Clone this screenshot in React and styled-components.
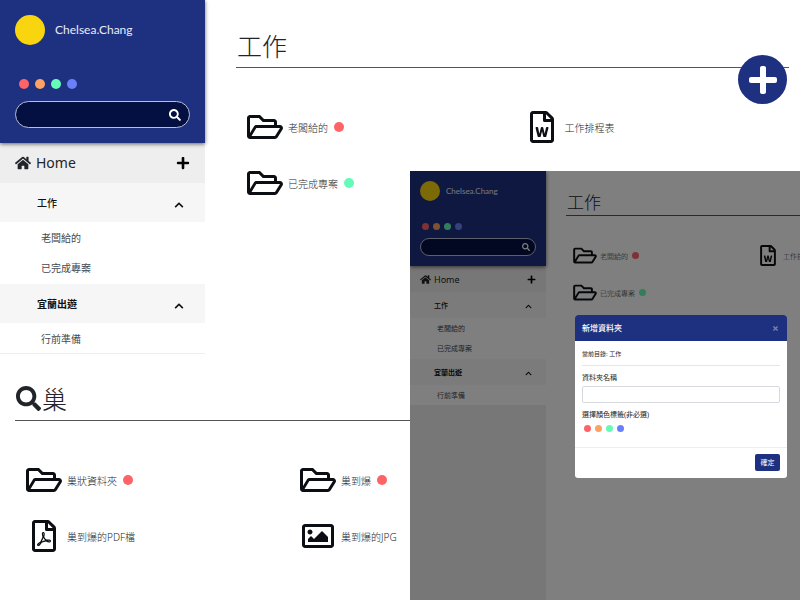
import React from "react";
import styled, { createGlobalStyle, ThemeProvider } from "styled-components";
import {
  FaHome,
  FaPlus,
  FaSearch,
  FaChevronUp,
  FaRegFolderOpen,
  FaRegFileWord,
  FaRegFilePdf,
  FaRegImage,
  FaTimes,
} from "react-icons/fa";

const regular = {
  sidebar: 205,
  pad: 15,
  avatar: 30,
  nameGap: 10,
  name: 12,
  dot: 10,
  dotGap: 6,
  dotInset: 4,
  dotsTop: 34,
  dotsBottom: 12,
  search: 27,
  searchPad: 8,
  searchIcon: 12,
  home: 14,
  homeGap: 5,
  homeRow: 40,
  homeIcon: 16,
  group: 10,
  groupRow: 39,
  groupIndent: 37,
  groupRight: 21,
  chevron: 10,
  chevronDrop: 5,
  item: 10,
  itemRow: 30,
  itemIndent: 41,
  listPad: 2,
  title: 25,
  titleTop: 27,
  titleRow: 40,
  titlePad: 4,
  gutter: 31,
  right: 11,
  filesTop: 31,
  filesPad: 11,
  fileRow: 56,
  fileIcon: 32,
  fileIconBox: 36,
  fileGap: 5,
  file: 10,
  column: 0,
};

const compact = {
  sidebar: 136,
  pad: 10,
  avatar: 20,
  nameGap: 6,
  name: 8,
  dot: 7,
  dotGap: 4,
  dotInset: 2,
  dotsTop: 22,
  dotsBottom: 8,
  search: 18,
  searchPad: 5,
  searchIcon: 8,
  home: 9,
  homeGap: 3,
  homeRow: 26,
  homeIcon: 11,
  group: 7,
  groupRow: 26,
  groupIndent: 24,
  groupRight: 14,
  chevron: 7,
  chevronDrop: 3,
  item: 7,
  itemRow: 20,
  itemIndent: 27,
  listPad: 1,
  title: 17,
  titleTop: 18,
  titleRow: 26,
  titlePad: 2,
  gutter: 20,
  right: 0,
  filesTop: 21,
  filesPad: 7,
  fileRow: 37,
  fileIcon: 21,
  fileIconBox: 24,
  fileGap: 3,
  file: 7,
  column: 183,
};

const px = (key) => ({ theme }) => `${theme[key]}px`;

const colors = {
  navy: "#1e3080",
  red: "#fc6468",
  orange: "#fba264",
  green: "#66fbb8",
  blue: "#6a80fb",
};

const GlobalStyle = createGlobalStyle`
  *, *::before, *::after { box-sizing: border-box; }
  body {
    margin: 0;
    background: #fff;
    color: #212529;
    font-family: "Noto Sans", "Noto Sans CJK TC", sans-serif;
  }
  button, input { font: inherit; color: inherit; }
  h1, h2, p, ul { margin: 0; padding: 0; }
`;

const Page = styled.div`
  position: relative;
  min-height: 100vh;
  overflow: hidden;
`;

const Workspace = styled.div`
  display: flex;
  align-items: flex-start;
`;

const Sidebar = styled.nav`
  flex: none;
  width: ${px("sidebar")};
`;

const Profile = styled.header`
  position: relative;
  padding: ${px("pad")};
  background: ${colors.navy};
  box-shadow: 0 1px 4px rgba(0, 0, 0, 0.6);
`;

const User = styled.div`
  display: flex;
  align-items: center;
  gap: ${px("nameGap")};
  font-family: Lato, sans-serif;
  font-size: ${px("name")};
  line-height: 1;
  color: #e9ecf8;
`;

const Avatar = styled.span`
  width: ${px("avatar")};
  height: ${px("avatar")};
  border-radius: 50%;
  background: #f8d50f;
`;

const DotRow = styled.div`
  display: flex;
  gap: ${px("dotGap")};
  margin: ${px("dotsTop")} 0 ${px("dotsBottom")} ${px("dotInset")};
`;

const DotButton = styled.button`
  width: ${px("dot")};
  height: ${px("dot")};
  padding: 0;
  border: 0;
  border-radius: 50%;
  background: ${({ $color }) => colors[$color]};
`;

const SearchBox = styled.form`
  display: flex;
  align-items: center;
  height: ${px("search")};
  padding: 0 ${px("searchPad")};
  border: 1px solid #b9bfd8;
  border-radius: 14px;
  background: #051042;
  color: #fff;
`;

const SearchInput = styled.input`
  flex: 1;
  min-width: 0;
  padding: 0;
  border: 0;
  outline: 0;
  background: transparent;
  font-size: ${px("name")};
`;

const IconButton = styled.button`
  display: flex;
  padding: 0;
  border: 0;
  background: transparent;
  color: inherit;
  font-size: ${px("searchIcon")};
`;

const HomeRow = styled.div`
  display: flex;
  align-items: center;
  justify-content: space-between;
  height: ${px("homeRow")};
  padding: 0 ${px("pad")};
  background: #eee;
`;

const HomeLink = styled.a`
  display: flex;
  align-items: center;
  gap: ${px("homeGap")};
  color: #212529;
  font-size: ${px("home")};
  line-height: 1;
  text-decoration: none;

  svg { font-size: ${px("homeIcon")}; }
`;

const AddButton = styled(IconButton)`
  color: #000;
  font-size: ${px("home")};
`;

const GroupButton = styled.button`
  display: flex;
  align-items: center;
  justify-content: space-between;
  width: 100%;
  height: ${px("groupRow")};
  padding: 0 ${px("groupRight")} 0 ${px("groupIndent")};
  border: 0;
  background: #f6f6f6;
  color: #111;
  font-size: ${px("group")};
  font-weight: ${({ $strong }) => ($strong ? 700 : 500)};

  svg {
    margin-top: ${px("chevronDrop")};
    font-size: ${px("chevron")};
  }
`;

const ItemList = styled.ul`
  padding-bottom: ${({ theme, $last }) => ($last ? 0 : theme.listPad)}px;
  list-style: none;
  background: #fff;
  border-bottom: ${({ $last }) => ($last ? "1px solid #eee" : "0")};
`;

const ItemLink = styled.a`
  display: flex;
  align-items: center;
  height: ${px("itemRow")};
  padding-left: ${px("itemIndent")};
  color: #444a50;
  font-size: ${px("item")};
  text-decoration: none;
`;

const Main = styled.main`
  flex: 1;
  min-width: 0;
  padding: ${px("titleTop")} ${px("right")} 0 ${px("gutter")};
`;

const TitleBar = styled.div`
  position: relative;
  border-bottom: 1px solid #555;
`;

const Title = styled.h1`
  display: flex;
  align-items: center;
  gap: 1px;
  height: ${px("titleRow")};
  padding: 0 0 ${px("titlePad")} 1px;
  font-size: ${px("title")};
  font-weight: 300;
  line-height: 1;
  font-family: "Noto Sans CJK TC", sans-serif;
`;

const FloatingAdd = styled.button`
  position: absolute;
  top: 28px;
  right: 2px;
  display: flex;
  align-items: center;
  justify-content: center;
  width: 49px;
  height: 49px;
  padding: 0;
  border: 0;
  border-radius: 50%;
  background: ${colors.navy};
  color: #fff;
  font-size: 32px;
`;

const Files = styled.div`
  display: grid;
  grid-template-columns: repeat(2, minmax(${px("column")}, 1fr));
  margin-top: ${px("filesTop")};
`;

const FileLink = styled.a`
  display: flex;
  align-items: center;
  gap: ${px("fileGap")};
  height: ${px("fileRow")};
  padding-left: ${px("filesPad")};
  color: #24292e;
  font-size: ${px("file")};
  font-weight: 300;
  text-decoration: none;
  white-space: nowrap;
`;

const FileIcon = styled.span`
  display: flex;
  justify-content: center;
  width: ${px("fileIconBox")};
  color: #0b0f13;

  svg {
    width: ${px("fileIconBox")};
    height: ${px("fileIcon")};
  }
`;

const Tag = styled.span`
  width: ${px("dot")};
  height: ${px("dot")};
  margin-left: 1px;
  border-radius: 50%;
  background: ${({ $color }) => colors[$color]};
`;

const Results = styled.section`
  margin: 26px 237px 0 15px;
`;

const Preview = styled.section`
  position: absolute;
  top: 171px;
  right: 0;
  bottom: 0;
  left: 410px;
  overflow: hidden;
  background: linear-gradient(90deg, #eee 136px, #fff 136px);
`;

const Backdrop = styled.div`
  position: absolute;
  inset: 0;
  padding: 144px 13px 0 165px;
  background: rgba(0, 0, 0, 0.5);
`;

const Dialog = styled.form`
  overflow: hidden;
  border-radius: 3px;
  background: #fff;
  font-size: 7px;
  line-height: 10px;
`;

const DialogHeader = styled.div`
  display: flex;
  align-items: center;
  justify-content: space-between;
  height: 26px;
  padding: 0 8px 0 7px;
  background: ${colors.navy};
  color: #fff;
`;

const DialogTitle = styled.h2`
  font-size: 8px;
  font-weight: 500;
`;

const CloseButton = styled(IconButton)`
  color: #7a82a8;
  font-size: 7px;
`;

const DialogBody = styled.div`
  height: 107px;
  padding: 8px 7px 0;
  border-bottom: 1px solid #eceef0;
`;

const Path = styled.p`
  padding-bottom: 6px;
  margin-bottom: 7px;
  border-bottom: 1px solid #e4e6e8;
  font-size: 6px;
`;

const FieldLabel = styled.label`
  display: block;
`;

const TextInput = styled.input`
  display: block;
  width: 100%;
  height: 17px;
  margin: 3px 0 7px;
  border: 1px solid #d6dade;
  border-radius: 2px;
  background: #fff;
`;

const ColorChoices = styled.fieldset`
  min-width: 0;
  margin: 0;
  padding: 0;
  border: 0;

  legend { padding: 0; }
`;

const RadioRow = styled.div`
  display: flex;
  gap: 4px;
  margin: 5px 0 0 2px;
`;

const ColorRadio = styled.input`
  appearance: none;
  width: 7px;
  height: 7px;
  margin: 0;
  border-radius: 50%;
  background: ${({ $color }) => colors[$color]};
`;

const DialogFooter = styled.div`
  display: flex;
  justify-content: flex-end;
  padding: 6px 7px 7px;
`;

const ConfirmButton = styled.button`
  width: 25px;
  height: 17px;
  padding: 0;
  border: 0;
  border-radius: 2px;
  background: ${colors.navy};
  color: #fff;
  font-size: 7px;
`;

const tagColors = [
  ["red", "紅色"],
  ["orange", "橘色"],
  ["green", "綠色"],
  ["blue", "藍色"],
];

const groups = [
  { name: "工作", items: ["老闆給的", "已完成專案"] },
  { name: "宜蘭出遊", items: ["行前準備"], strong: true },
];

const workFiles = [
  { name: "老闆給的", icon: FaRegFolderOpen, tag: "red" },
  { name: "工作排程表", icon: FaRegFileWord },
  { name: "已完成專案", icon: FaRegFolderOpen, tag: "green" },
];

const resultFiles = [
  { name: "巢狀資料夾", icon: FaRegFolderOpen, tag: "red" },
  { name: "巢到爆", icon: FaRegFolderOpen, tag: "red" },
  { name: "巢到爆的PDF檔", icon: FaRegFilePdf },
  { name: "巢到爆的JPG", icon: FaRegImage },
];

function Navigation() {
  return (
    <Sidebar>
      <Profile>
        <User>
          <Avatar />
          Chelsea.Chang
        </User>
        <DotRow>
          {tagColors.map(([color, label]) => (
            <DotButton key={color} type="button" $color={color} aria-label={label} />
          ))}
        </DotRow>
        <SearchBox role="search">
          <SearchInput type="text" aria-label="搜尋" />
          <IconButton type="button" aria-label="搜尋">
            <FaSearch />
          </IconButton>
        </SearchBox>
      </Profile>
      <HomeRow>
        <HomeLink href="#home">
          <FaHome />
          Home
        </HomeLink>
        <AddButton type="button" aria-label="新增">
          <FaPlus />
        </AddButton>
      </HomeRow>
      {groups.map((group, index) => (
        <React.Fragment key={group.name}>
          <GroupButton type="button" aria-expanded="true" $strong={group.strong}>
            {group.name}
            <FaChevronUp />
          </GroupButton>
          <ItemList $last={index === groups.length - 1}>
            {group.items.map((item) => (
              <li key={item}>
                <ItemLink href="#folder">{item}</ItemLink>
              </li>
            ))}
          </ItemList>
        </React.Fragment>
      ))}
    </Sidebar>
  );
}

function FileGrid({ files }) {
  return (
    <Files>
      {files.map(({ name, icon: Icon, tag }) => (
        <FileLink key={name} href="#file">
          <FileIcon>
            <Icon />
          </FileIcon>
          {name}
          {tag && <Tag $color={tag} />}
        </FileLink>
      ))}
    </Files>
  );
}

function FolderView({ withAdd }) {
  return (
    <Workspace>
      <Navigation />
      <Main>
        <TitleBar>
          <Title>工作</Title>
          {withAdd && (
            <FloatingAdd type="button" aria-label="新增檔案">
              <FaPlus />
            </FloatingAdd>
          )}
        </TitleBar>
        <FileGrid files={workFiles} />
      </Main>
    </Workspace>
  );
}

function NewFolderDialog() {
  return (
    <Dialog role="dialog" aria-labelledby="dialog-title">
      <DialogHeader>
        <DialogTitle id="dialog-title">新增資料夾</DialogTitle>
        <CloseButton type="button" aria-label="關閉">
          <FaTimes />
        </CloseButton>
      </DialogHeader>
      <DialogBody>
        <Path>當前目錄: 工作</Path>
        <FieldLabel htmlFor="folder-name">資料夾名稱</FieldLabel>
        <TextInput id="folder-name" type="text" />
        <ColorChoices>
          <legend>選擇顏色標籤(非必選)</legend>
          <RadioRow>
            {tagColors.map(([color, label]) => (
              <ColorRadio key={color} type="radio" name="tag" $color={color} aria-label={label} />
            ))}
          </RadioRow>
        </ColorChoices>
      </DialogBody>
      <DialogFooter>
        <ConfirmButton type="button">確定</ConfirmButton>
      </DialogFooter>
    </Dialog>
  );
}

export default function App() {
  return (
    <Page lang="zh-Hant">
      <GlobalStyle />
      <ThemeProvider theme={regular}>
        <FolderView withAdd />
        <Results>
          <TitleBar>
            <Title>
              <FaSearch />
              巢
            </Title>
          </TitleBar>
          <FileGrid files={resultFiles} />
        </Results>
      </ThemeProvider>
      <ThemeProvider theme={compact}>
        <Preview>
          <FolderView />
          <Backdrop>
            <NewFolderDialog />
          </Backdrop>
        </Preview>
      </ThemeProvider>
    </Page>
  );
}
